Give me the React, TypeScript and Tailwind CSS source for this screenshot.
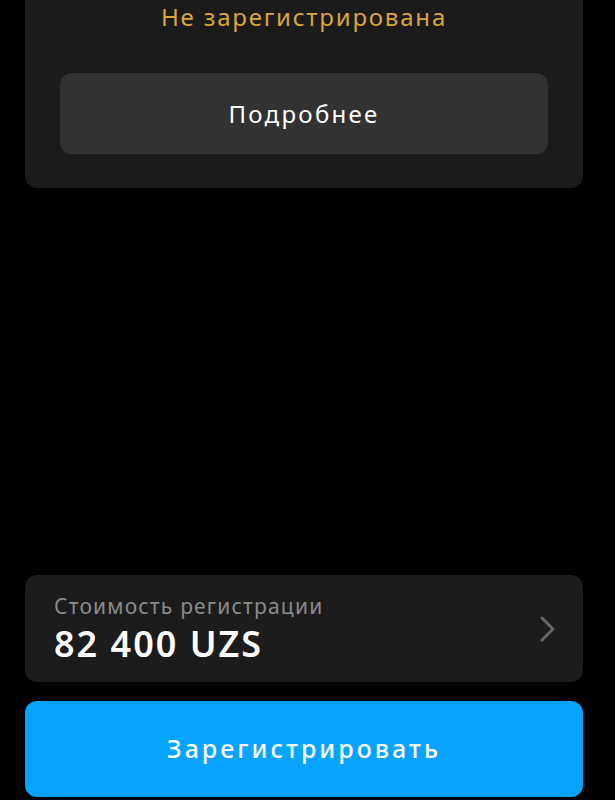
import React from "react";

const font = { fontFamily: '"Noto Sans", "Open Sans", sans-serif' };

const App: React.FC = () => {
  return (
    <div className="h-[800px] w-full overflow-hidden bg-black flex flex-col pl-[25px] pr-[32px]" style={font}>
      <div className="bg-[#1b1b1b] rounded-b-[12px] h-[188px] flex flex-col items-center shrink-0">
        <div className="text-[#d9a53c] text-[24px] leading-none mt-[5px] tracking-[1.8px]">Не зарегистрирована</div>
        <button className="mt-[44px] w-[488px] h-[81px] rounded-[12px] bg-[#323232] text-white text-[24px] tracking-[2.3px]">
          Подробнее
        </button>
      </div>

      <div className="flex-1" />

      <div className="bg-[#1c1c1c] rounded-[12px] h-[107px] flex items-center justify-between pl-[29px] pr-[26px] shrink-0">
        <div className="flex flex-col">
          <span className="text-[#8a8a8a] text-[21px] leading-none tracking-[1.2px]">Стоимость регистрации</span>
          <span className="text-white text-[36px] font-semibold leading-none mt-[9px] tracking-[2px]">82 400 UZS</span>
        </div>
        <svg width="18" height="28" viewBox="0 0 18 28" fill="none">
          <path d="M3 3 L14 14 L3 25" stroke="#666666" strokeWidth="3" strokeLinecap="round" strokeLinejoin="round" />
        </svg>
      </div>

      <button className="mt-[19px] mb-[3px] h-[96px] w-full rounded-[12px] bg-[#06a4ff] text-white text-[25px] font-medium tracking-[3px] shrink-0">
        Зарегистрировать
      </button>
    </div>
  );
};

export default App;
